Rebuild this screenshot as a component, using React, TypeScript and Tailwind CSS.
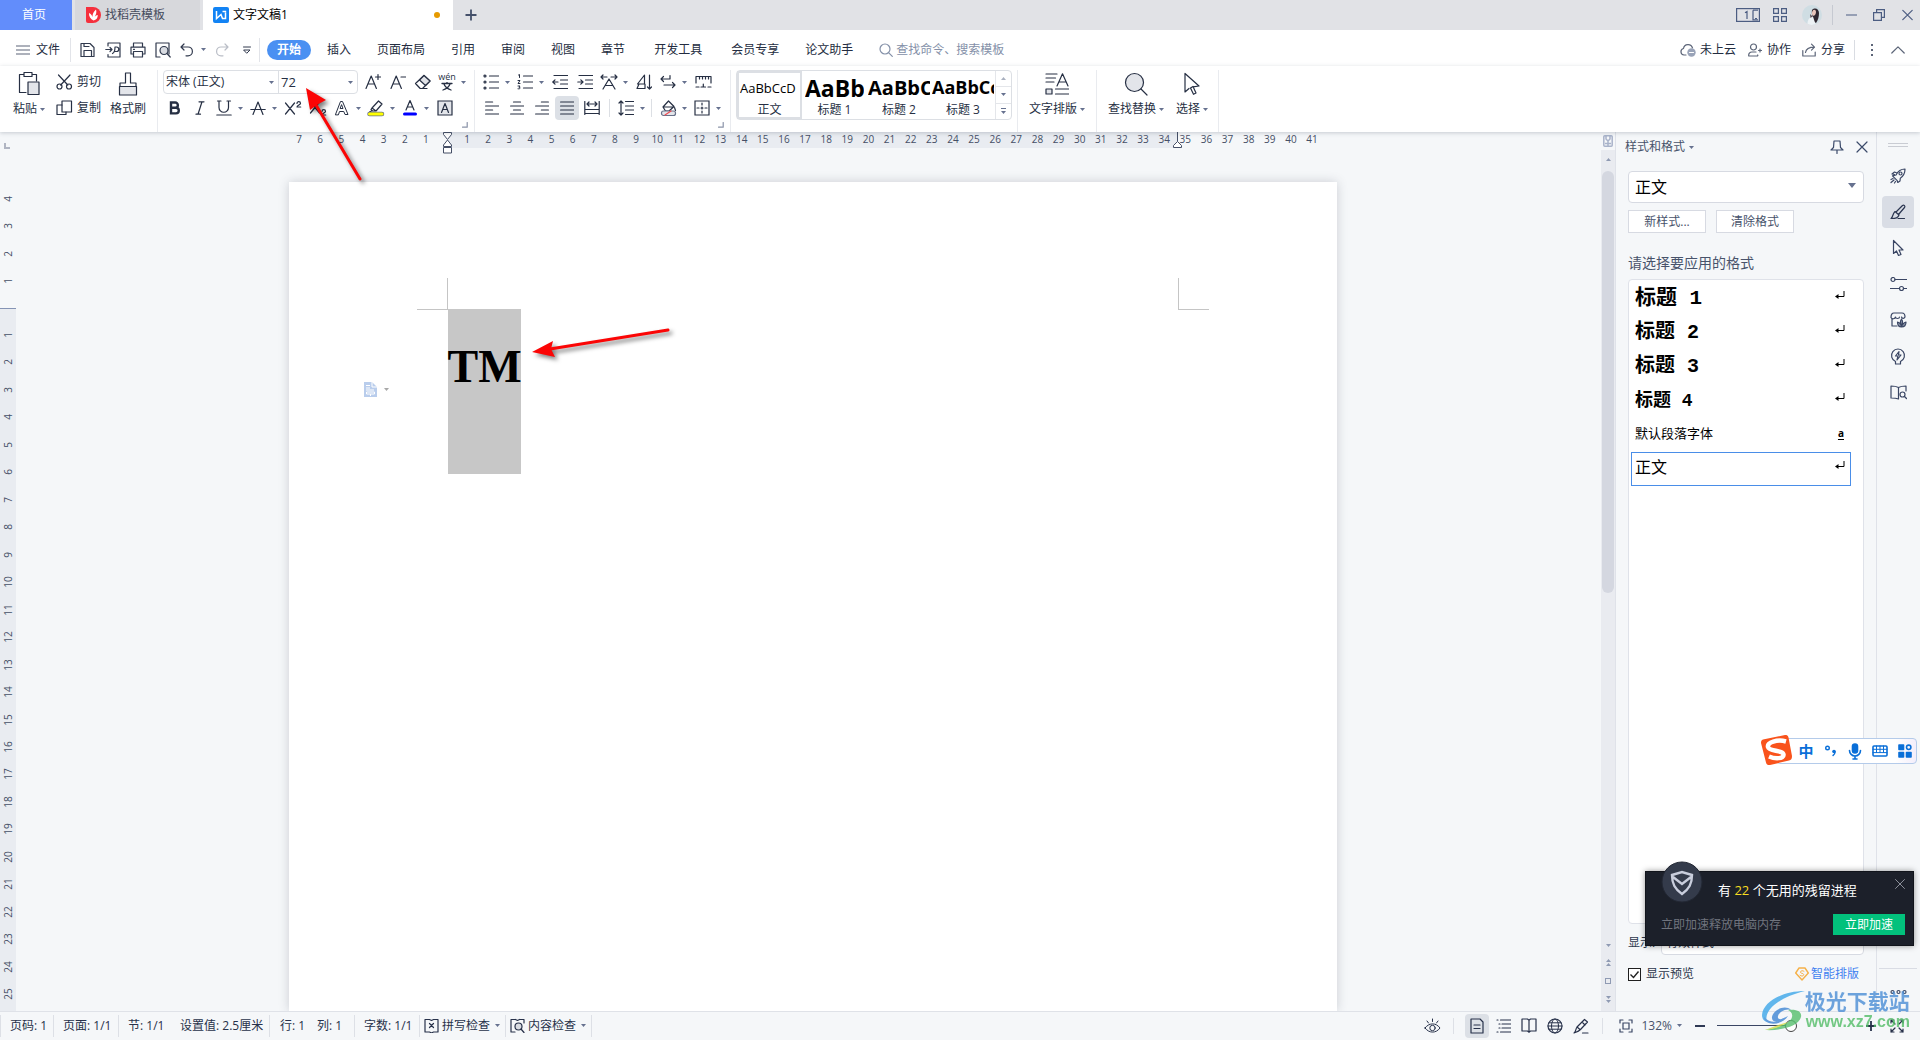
import type { ReactNode } from "react";

type IconProps = { w?: number; h?: number; sw?: number; className?: string; children: ReactNode };

function Icon({ w = 18, h = 18, sw = 1.2, className = "", children }: IconProps) {
  return (
    <svg
      width={w}
      height={h}
      viewBox={`0 0 ${w} ${h}`}
      fill="none"
      stroke="currentColor"
      strokeWidth={sw}
      strokeLinejoin="round"
      strokeLinecap="round"
      className={`shrink-0 ${className}`}
      aria-hidden="true"
    >
      {children}
    </svg>
  );
}

function Caret({ className = "text-[#66718f]" }: { className?: string }) {
  return (
    <svg width="5" height="3" viewBox="0 0 5 3" className={`shrink-0 ${className}`} aria-hidden="true">
      <path d="M0 0h5L2.500 3z" fill="currentColor" />
    </svg>
  );
}

/* Square tool button */
function Tool({ label, active = false, children }: { label: string; active?: boolean; children: ReactNode }) {
  return (
    <button
      aria-label={label}
      className={
        active
          ? "flex h-6 w-6 shrink-0 items-center justify-center rounded-sm bg-[#dce0e6]"
          : "flex h-6 w-6 shrink-0 items-center justify-center rounded-sm"
      }
    >
      {children}
    </button>
  );
}

/* Tool button with a drop-down arrow */
function DropTool({ label, children }: { label: string; children: ReactNode }) {
  return (
    <button aria-label={label} className="flex h-6 shrink-0 items-center">
      <span className="flex w-[22px] justify-center">{children}</span>
      <span className="flex w-[11px] justify-center">
        <Caret />
      </span>
    </button>
  );
}

function BigTool({ icon, label, caret = true }: { icon: ReactNode; label: string; caret?: boolean }) {
  return (
    <button className="flex flex-col items-center">
      <span className="flex h-[28px] items-center">{icon}</span>
      <span className="flex h-[22px] items-center gap-[3px] whitespace-nowrap">
        {label}
        {caret && <Caret />}
      </span>
    </button>
  );
}

const Sep = () => <span className="h-[62px] w-px shrink-0 self-start bg-[#e9ebef]" />;

function Launcher() {
  return (
    <button aria-label="更多设置" className="absolute right-[6px] bottom-1 text-[#8a93a8]">
      <Icon w={6} h={6} sw={1.2}>
        <path d="M5.200 .5v4.700H.5" />
      </Icon>
    </button>
  );
}

function TitleBar() {
  return (
    <header className="flex h-[30px] shrink-0 items-stretch bg-[#e1e2e6]">
      <button className="w-[72px] bg-[#628dfb] pr-1 text-white">首页</button>
      <button className="ml-[3px] flex w-[125px] items-center gap-1 bg-[#d7d8dc] pl-[11px] text-[#454b5c]">
        <svg width="15" height="16" viewBox="0 0 15 16" aria-hidden="true">
          <path d="M0 0h7a8 8 0 0 1 0 16H2a2 2 0 0 1-2-2z" fill="#f5303d" />
          <path d="M7.500 13.500c-3-1.500-4.700-4-4.500-7.500 2 1 3 2.300 3.400 4C6.500 7.500 7.500 4.500 10 2.500c.8 2.500.3 5-1.400 7.200 1-.9 2-1.500 3.200-1.700 0 3-1.500 5-4.300 5.500z" fill="#fff" />
        </svg>
        找稻壳模板
      </button>
      <div className="ml-[3px] flex w-[250px] items-center gap-1 bg-white pl-[10px] text-black">
        <svg width="16" height="16" viewBox="0 0 16 16" aria-hidden="true">
          <rect width="16" height="16" rx="2" fill="#1283f4" />
          <path d="M3.500 4v7.500L8 7.500l1.500 4h3V5.500M9.500 4.500h3.700" stroke="#fff" strokeWidth="1.500" fill="none" />
        </svg>
        <span className="flex-1">文字文稿1</span>
        <span className="mr-[13px] h-[6px] w-[6px] rounded-full bg-[#e69a00]" />
      </div>
      <button aria-label="新建标签" className="flex w-9 items-center justify-center text-[#44506a]">
        <Icon w={12} h={12} sw={1.800}>
          <path d="M6 .5v11M.5 6h11" strokeLinecap="butt" />
        </Icon>
      </button>
      <div className="flex-1" />
      <div className="flex items-center text-[#4c5d82]">
        <button aria-label="窗口布局" className="mr-[13px]">
          <svg width="24" height="14" viewBox="0 0 24 14" fill="none" stroke="currentColor" strokeWidth="1.200" aria-hidden="true">
            <rect x=".6" y=".6" width="22.800" height="12.800" />
            <path d="M9 4.800l2-1.300v7.500M17 2.200h5M17 2.200v9.600h5M19 10.500h2" />
          </svg>
        </button>
        <button aria-label="应用" className="mr-[15px]">
          <Icon w={14} h={14}>
            <path d="M.6.6h4.800v4.800H.6zM8.600.6h4.800v4.800H8.600zM.6 8.600h4.800v4.800H.6zM8.600 8.600h4.800v4.800H8.600z" strokeLinejoin="miter" />
          </Icon>
        </button>
        <button aria-label="用户" className="mr-[10px]">
          <svg width="20" height="20" viewBox="0 0 20 20" aria-hidden="true">
            <circle cx="10" cy="10" r="10" fill="#cfdde3" />
            <path d="M10 5c3-3 7-1 7 3 0 4-1 7-3 10l-3-2c1-3-2-6-1-11z" fill="#2f2730" />
            <path d="M10.500 6c1-2 3.500-1.500 3.500 1s-1.500 4-2.700 3.800C9.800 10.600 9.500 8 10.500 6z" fill="#e9c5bb" />
            <path d="M5.500 18.800c0-4 2-7 5.500-7l2.500 7.300c-3 1.200-5.500 1-8-.3z" fill="#edf2f5" />
            <path d="M8 9l2.500 2.500L8.500 13z" fill="#5d4b52" />
          </svg>
        </button>
        <span className="mr-[13px] h-5 w-px bg-[#c6c9d1]" />
        <button aria-label="最小化" className="mr-4">
          <Icon w={11} h={12}><path d="M.5 6h10" /></Icon>
        </button>
        <button aria-label="还原" className="mr-[17px]">
          <Icon w={12} h={12}>
            <path d="M.6 3.600h7.800v7.800H.6zM3.600 3.600v-3h7.800v7.800H8.400" strokeLinejoin="miter" />
          </Icon>
        </button>
        <button aria-label="关闭" className="mr-[7px]">
          <Icon w={11} h={12}><path d="M.8 1.300l9.400 9.400M10.200 1.300L.8 10.700" /></Icon>
        </button>
      </div>
    </header>
  );
}

function MenuBar() {
  return (
    <nav className="flex h-9 shrink-0 items-center bg-white pt-[3px] whitespace-nowrap text-[#232c40]">
      <button className="ml-4 flex items-center gap-[6px]">
        <Icon w={14} h={10} className="text-[#5c6578]"><path d="M.5 1h13M.5 5h13M.5 9h13" /></Icon>
        文件
      </button>
      <span className="ml-[10px] h-6 w-px bg-[#e2e4e9]" />
      <div className="ml-[5px] flex items-center gap-px text-[#30394d]">
        <Tool label="保存">
          <Icon w={16} h={16}>
            <path d="M1 14.500V1.500h9l4 4v9zM4 1.500v3h5M4 14V8.500h7.500V14" />
          </Icon>
        </Tool>
        <Tool label="输出为PDF">
          <Icon w={16} h={16}>
            <path d="M3 4V1h12v14H3v-2.500M.8 7.500h6M5 5.500l2 2-2 2M7.500 11.500c2-1 2.500-3 2.500-6.500h1.500a2 2 0 0 1 0 4.500H9.500" />
          </Icon>
        </Tool>
        <Tool label="打印">
          <Icon w={16} h={16}>
            <path d="M3.500 5V1h9v4M3.500 12H1V5.200h14V12h-2.500M3.500 9.500h9V15h-9zM3.500 7.300h1" />
          </Icon>
        </Tool>
        <Tool label="打印预览">
          <Icon w={16} h={16}>
            <path d="M5 15H1V1h13v11" />
            <circle cx="9" cy="8.500" r="4" fill="#d9dce2" />
            <path d="M12 11.500l3.200 3.500" />
          </Icon>
        </Tool>
        <DropTool label="撤销">
          <Icon w={14} h={14}><path d="M4 1L1 4l3 3M1.200 4H8a4.300 4.300 0 0 1 0 8.800H6" /></Icon>
        </DropTool>
        <Tool label="恢复">
          <Icon w={14} h={14} className="text-[#b9bdc6]"><path d="M10 1l3 3-3 3M12.800 4H6a4.300 4.300 0 0 0 0 8.800h2" /></Icon>
        </Tool>
        <Tool label="自定义">
          <Icon w={8} h={8} sw={1}><path d="M.5 1h7M1 4h6L4 7z" /></Icon>
        </Tool>
      </div>
      <span className="h-6 w-px bg-[#e2e4e9]" />
      <div className="ml-[7px] flex items-center gap-[26px]">
        <button className="-mr-[10px] h-5 rounded-full bg-[#4a90f2] px-[10px] font-bold text-white">开始</button>
        <button>插入</button>
        <button>页面布局</button>
        <button>引用</button>
        <button>审阅</button>
        <button>视图</button>
        <button>章节</button>
        <button className="px-[3px]">开发工具</button>
        <button>会员专享</button>
        <button>论文助手</button>
        <label className="flex items-center gap-[3px] text-[#8490a8]">
          <Icon w={14} h={14}><circle cx="6" cy="6" r="5" /><path d="M9.800 9.800l3.500 3.500" /></Icon>
          <input aria-label="查找命令" placeholder="查找命令、搜索模板" className="w-[120px] bg-transparent outline-none placeholder:text-[#8490a8]" />
        </label>
      </div>
      <div className="flex-1" />
      <button className="flex items-center gap-1">
        <Icon w={16} h={14} className="text-[#5c6578]">
          <path d="M6 12H4a3.300 3.300 0 0 1-.5-6.500 4.600 4.600 0 0 1 9-.5" />
          <circle cx="11.500" cy="9.500" r="4.200" fill="#99a3b8" stroke="none" />
          <path d="M9.500 9.500h4" stroke="#fff" />
        </Icon>
        未上云
      </button>
      <button className="ml-3 flex items-center gap-[5px]">
        <Icon w={14} h={14} className="text-[#5c6578]">
          <circle cx="5.500" cy="4" r="3" /><path d="M8 9H4a3.200 3.200 0 0 0-3.200 4h8.400c.5 0 .8-.5.5-1M10.500 7.500h3M12 6v3" />
        </Icon>
        协作
      </button>
      <button className="ml-[11px] flex items-center gap-[5px]">
        <Icon w={14} h={14} className="text-[#5c6578]">
          <path d="M.8 7.500V13h12.400V9M3.500 9.500C4 6 7 4.200 12.500 4.200M9.500 1.200l3 3-3 3" />
        </Icon>
        分享
      </button>
      <span className="ml-[9px] h-5 w-px bg-[#d9dce2]" />
      <button aria-label="更多" className="ml-4 flex flex-col gap-[3px]">
        <span className="h-[2px] w-[2px] bg-[#5c6578]" />
        <span className="h-[2px] w-[2px] bg-[#5c6578]" />
        <span className="h-[2px] w-[2px] bg-[#5c6578]" />
      </button>
      <button aria-label="折叠功能区" className="mr-[15px] ml-[18px] text-[#5c6578]">
        <Icon w={14} h={8}><path d="M.8 7L7 .8 13.200 7" /></Icon>
      </button>
    </nav>
  );
}

function FontGroup() {
  return (
    <section className="relative flex h-full flex-col gap-[2px] px-[5px]">
      <div className="flex h-6 items-center">
        <div className="flex h-6 w-[195px] rounded-sm border border-[#dcdfe4]">
          <label className="relative flex w-[115px] items-center border-r border-[#dcdfe4]">
            <input aria-label="字体" defaultValue="宋体 (正文)" className="w-full pl-[2px] outline-none" />
            <span className="absolute right-1"><Caret /></span>
          </label>
          <label className="relative flex flex-1 items-center">
            <input aria-label="字号" defaultValue="72" className="w-full pl-[2px] text-[13px] outline-none" />
            <span className="absolute right-1"><Caret /></span>
          </label>
        </div>
        <div className="ml-[3px] flex gap-px">
          <Tool label="增大字号">
            <Icon w={16} h={18}><path d="M1 15.500L6.200 3l5.200 12.500M3 11h6.500M10.500 4h5M13 1.500v5" /></Icon>
          </Tool>
          <Tool label="减小字号">
            <Icon w={16} h={18}><path d="M1 15.500L6.200 3l5.200 12.500M3 11h6.500M11 4h4.500" /></Icon>
          </Tool>
          <Tool label="清除格式">
            <Icon w={18} h={16}>
              <path d="M1.500 9.500L10 1.500l6 5.500-7.500 7.500H6.200z" />
              <path d="M5.500 6L11.500 11.500 16 7 10 1.500z" fill="#e1e3e8" />
              <path d="M8.500 14.500h4.500" />
            </Icon>
          </Tool>
          <DropTool label="拼音指南">
            <span className="flex flex-col items-center gap-px">
              <span className="h-[8px] text-[9px] leading-[8px]">wén</span>
              <Icon w={12} h={9} sw={1.300}><path d="M1 1.500h10M6 0v1.500M3 2c1 3 4 5 7 6M9 2C8 5 5 7 2 8" /></Icon>
            </span>
          </DropTool>
        </div>
      </div>
      <div className="flex h-6 items-center gap-px">
        <Tool label="加粗">
          <Icon w={12} h={14} sw={2.400}><path d="M2 1.500h4.200a2.600 2.600 0 0 1 0 5.300H2zM2 6.800h5a2.800 2.800 0 0 1 0 5.600H2z" strokeLinejoin="miter" /></Icon>
        </Tool>
        <Tool label="倾斜">
          <Icon w={10} h={14}><path d="M4 .8h5M1 13.200h4.500M7 .8L3 13.200" /></Icon>
        </Tool>
        <DropTool label="下划线">
          <Icon w={16} h={16}><path d="M3 1v6.500a4.500 4.500 0 0 0 9.500 0V1M.8 15h14.400M1.500 1H5M11 1h3.500" /></Icon>
        </DropTool>
        <DropTool label="删除线">
          <Icon w={16} h={16}><path d="M3 14.500L8 2l5 12.500M.8 9.500h14.400" /></Icon>
        </DropTool>
        <Tool label="上标">
          <Icon w={18} h={16}><path d="M1.500 3l9 11M10.500 3l-9 11M13 3.500c0-2.500 3.500-2.500 3.500 0 0 1.200-3.500 2-3.500 3.500h3.700" /></Icon>
        </Tool>
        <Tool label="下标">
          <Icon w={18} h={16}><path d="M1.500 2l9 11M10.500 2l-9 11M13 11.500c0-2.500 3.500-2.500 3.500 0 0 1.200-3.500 2-3.500 3.500h3.700" /></Icon>
        </Tool>
        <DropTool label="文字效果">
          <Icon w={16} h={16} sw={1}>
            <path d="M1.500 14.500L6.500 1.500h2l5.500 13h-3l-1.200-3H5.500l-1 3zM6.500 8.500h2.500L7.700 5z" />
          </Icon>
        </DropTool>
        <DropTool label="突出显示">
          <Icon w={18} h={18}>
            <path d="M5 9l6.500-7L15 5l-6 7H5.500L4 10.500zM5 9l4 3M4.500 12l-2 1" fill="#fff" />
            <path d="M2.500 15h12.500" stroke="#69728a" strokeWidth="4.500" />
            <path d="M2.500 15h12.500" stroke="#ffff00" strokeWidth="3" />
          </Icon>
        </DropTool>
        <DropTool label="字体颜色">
          <Icon w={16} h={18}>
            <path d="M4 11L8 1.500 12 11M5.500 8h5" />
            <path d="M2.500 15h11" stroke="#0000ff" strokeWidth="3" />
          </Icon>
        </DropTool>
        <Tool label="字符底纹">
          <Icon w={16} h={16}>
            <path d="M1 1h14v14H1z" fill="#e3e5ea" strokeLinejoin="miter" />
            <path d="M4.500 12.500L8 3.500l3.500 9M5.700 9.500h4.600" />
          </Icon>
        </Tool>
      </div>
      <Launcher />
    </section>
  );
}

function ParagraphGroup() {
  return (
    <section className="relative flex h-full flex-col gap-[2px] pr-[3px] pl-[5px]">
      <div className="flex h-6 items-center gap-px pr-3">
        <DropTool label="项目符号">
          <Icon w={16} h={16}>
            <path d="M6.500 2h9M6.500 8h9M6.500 14h9" />
            <circle cx="2" cy="2" r="1" /><circle cx="2" cy="8" r="1" /><circle cx="2" cy="14" r="1" />
          </Icon>
        </DropTool>
        <DropTool label="编号">
          <Icon w={16} h={16}>
            <path d="M6.500 2h9M6.500 8h9M6.500 14h9" />
            <path d="M1.500 1L2.500.5V3.500M1 6.500h2L1 9.500h2M1 12h2l-1 1.300c2 0 1.500 2-1 1.500" strokeWidth="1" />
          </Icon>
        </DropTool>
        <Tool label="减少缩进">
          <Icon w={16} h={16}><path d="M2 1.500h13.500M8.500 6h7M8.500 10h7M2 14.500h13.500M.8 8H6M3 5.800L.8 8 3 10.200" /></Icon>
        </Tool>
        <Tool label="增加缩进">
          <Icon w={16} h={16}><path d="M2 1.500h13.500M8.500 6h7M8.500 10h7M2 14.500h13.500M.8 8H6M3.800 5.800L6 8l-2.200 2.200" /></Icon>
        </Tool>
        <DropTool label="中文版式">
          <Icon w={18} h={16}><path d="M3 15L9 5l6 10M5 11.500h8M1 3h6M3 1L1 3l2 2M11 3h6M15 1l2 2-2 2" /></Icon>
        </DropTool>
        <Tool label="排序">
          <Icon w={16} h={18}><path d="M8.500 2L1.500 11h7zM3 11l-2 4.500h8V11M13.500 2v14M11.500 14l2 2 2-2" /></Icon>
        </Tool>
        <DropTool label="换行">
          <Icon w={16} h={16}><path d="M10 1.500V5H1M3.500 2.500L1 5l2.500 2.500M4 11h11M12.500 8.500L15 11l-2.500 2.500" /></Icon>
        </DropTool>
        <Tool label="制表位">
          <Icon w={17} h={14}><path d="M1 8V1.500h15V8M4.500 1.500V4M7.500 1.500V4M10.500 1.500V4M13.500 1.500V4M1 12h3M6 12h4.500M13 12h3M8.300 9v3" /></Icon>
        </Tool>
      </div>
      <div className="flex h-6 items-center gap-px">
        <Tool label="左对齐"><Icon w={14} h={14}><path d="M.6 1h7M.6 5h13M.6 9h7M.6 13h13" /></Icon></Tool>
        <Tool label="居中"><Icon w={14} h={14}><path d="M3.500 1h7M.6 5h13M3.500 9h7M.6 13h13" /></Icon></Tool>
        <Tool label="右对齐"><Icon w={14} h={14}><path d="M6.400 1h7M.6 5h13M6.400 9h7M.6 13h13" /></Icon></Tool>
        <Tool label="两端对齐" active><Icon w={14} h={14}><path d="M.6 1h13M.6 5h13M.6 9h13M.6 13h13" /></Icon></Tool>
        <Tool label="分散对齐"><Icon w={16} h={14}><path d="M.8.5v13M15.200.5v13M3 3h10M5 1L3 3l2 2M11 1l2 2-2 2M.8 8.500h14.400M.8 12.500h14.400" /></Icon></Tool>
        <span className="mx-1 h-[18px] w-px bg-[#dcdfe4]" />
        <DropTool label="行距">
          <Icon w={16} h={16}><path d="M7.500 1.500h8M7.500 6h8M7.500 10h8M7.500 14.500h8M3 1v14M1 3l2-2 2 2M1 13l2 2 2-2" /></Icon>
        </DropTool>
        <span className="mr-1 ml-[2px] h-[18px] w-px bg-[#dcdfe4]" />
        <DropTool label="底纹">
          <Icon w={17} h={18}>
            <path d="M3 8l5.500-6L14 7.500 9 12H5.500zM3 8h11M14.500 8.500l1 3" fill="#fff" />
            <rect x="1.500" y="12" width="14" height="4.500" rx="2" fill="#e3e5ea" stroke="#69728a" />
            <path d="M5 16l6-4" stroke="#f0484e" />
          </Icon>
        </DropTool>
        <DropTool label="边框">
          <Icon w={16} h={16}><path d="M1 1h14v14H1z" strokeLinejoin="miter" /><path d="M8 3v10M3 8h10" strokeDasharray="2 2" /></Icon>
        </DropTool>
      </div>
      <Launcher />
    </section>
  );
}

function StyleGallery() {
  return (
    <section className="flex h-full items-start px-[5px]">
      <div className="flex h-[50px] w-[276px] rounded-sm border border-[#dcdfe4] text-center">
        <button className="flex w-[65px] shrink-0 flex-col overflow-hidden border-2 border-[#dcdfe4] px-px">
          <span className="h-[28px] text-left text-[13px] leading-[30px] text-black">AaBbCcD</span>
          <span className="h-[18px] w-full leading-[18px]">正文</span>
        </button>
        <button className="flex w-[65px] shrink-0 flex-col overflow-hidden px-[3px]">
          <span className="h-[30px] w-full overflow-hidden text-left text-[23px] leading-[34px] font-bold text-black">AaBb</span>
          <span className="h-[18px] w-full leading-[18px]">标题 1</span>
        </button>
        <button className="flex w-[64px] shrink-0 flex-col overflow-hidden px-px">
          <span className="h-[30px] w-full overflow-hidden text-left text-[20px] leading-[33px] font-bold text-black">AaBbC</span>
          <span className="h-[18px] w-full leading-[18px]">标题 2</span>
        </button>
        <button className="flex w-[64px] shrink-0 flex-col overflow-hidden px-px">
          <span className="h-[30px] w-full overflow-hidden text-left text-[18px] leading-[33px] font-bold text-black">AaBbCc</span>
          <span className="h-[18px] w-full leading-[18px]">标题 3</span>
        </button>
        <div className="flex flex-1 flex-col divide-y divide-[#e4e6ea] border-l border-[#e4e6ea] text-[#66718f]">
          <button aria-label="上一行" className="flex flex-1 items-center justify-center">
            <span className="rotate-180"><Caret className="text-[#a9b0bf]" /></span>
          </button>
          <button aria-label="下一行" className="flex flex-1 items-center justify-center"><Caret /></button>
          <button aria-label="更多样式" className="flex flex-1 flex-col items-center justify-center gap-[2px]">
            <span className="h-px w-[5px] bg-[#66718f]" />
            <Caret />
          </button>
        </div>
      </div>
    </section>
  );
}

function Ribbon() {
  return (
    <div className="relative z-10 flex h-[66px] shrink-0 items-start bg-white pt-1 text-[#262f43] shadow-[0_1px_4px_rgba(60,70,90,0.25)]">
      <section className="flex w-[157px] shrink-0 items-start pl-[13px]">
        <BigTool
          label="粘贴"
          icon={
            <Icon w={24} h={26}>
              <path d="M9 21.500H2.500V3.500h17V10" />
              <path d="M7 5.500V1.500h8v4z" fill="#fff" />
              <path d="M11 11h11v12.500H11z" fill="#e3e5ea" />
            </Icon>
          }
        />
        <div className="ml-[11px] flex flex-col gap-[2px]">
          <button className="flex h-6 items-center gap-1">
            <Icon w={17} h={16}>
              <path d="M2.500 1l9.300 10M14 1L4.700 11" /><circle cx="3.500" cy="12.500" r="2.500" /><circle cx="13" cy="12.500" r="2.500" />
            </Icon>
            剪切
          </button>
          <button className="flex h-6 items-center gap-1">
            <Icon w={17} h={16}><path d="M6 1h9.500v11H6z" /><path d="M6 5H1v9.500h9V12" /></Icon>
            复制
          </button>
        </div>
        <div className="ml-[9px]">
          <BigTool
            label="格式刷"
            caret={false}
            icon={
              <Icon w={20} h={26}>
                <path d="M7.500 12V2h5v10H18v3.500H2V12z" />
                <path d="M1.500 15.500h17v8.500h-17z" fill="#e3e5ea" />
              </Icon>
            }
          />
        </div>
      </section>
      <Sep />
      <FontGroup />
      <Sep />
      <ParagraphGroup />
      <Sep />
      <StyleGallery />
      <Sep />
      <section className="flex w-[78px] shrink-0 justify-center">
        <BigTool
          label="文字排版"
          icon={
            <Icon w={24} h={22}>
              <path d="M1 1h11M1 5h9.500M1 9h8M12 13L17.500.8 23 13M14 9h7M10.500 16h13M10.500 21h13" /><path d="M1 16h6v5H1z" fill="#e3e5ea" />
            </Icon>
          }
        />
      </section>
      <Sep />
      <section className="flex w-[121px] shrink-0 gap-3 pl-[11px]">
        <BigTool
          label="查找替换"
          icon={<Icon w={24} h={24}><circle cx="10.500" cy="10.500" r="9" fill="#e3e5ea" /><path d="M17 17l6 6" /></Icon>}
        />
        <BigTool
          label="选择"
          icon={<Icon w={18} h={24}><path d="M2 1.500V20l4-3.500M2 1.500L16 14l-6 .8M10 14.500l3 6.500-2.500 1.300L7.500 16z" /></Icon>}
        />
      </section>
      <Sep />
    </div>
  );
}

const upTicks = [7, 6, 5, 4, 3, 2, 1];
const hTicks = Array.from({ length: 41 }, (_, i) => i + 1);
const vTicks = Array.from({ length: 25 }, (_, i) => i + 1);

function VerticalRuler() {
  return (
    <aside className="flex w-4 shrink-0 flex-col text-[10px] leading-none text-[#454f66]">
      <span className="mt-[11px] ml-1 h-[6px] w-[6px] border-b-2 border-l-2 border-[#b0b5c2]" />
      <div className="mt-9 flex h-[110px] flex-col">
        {[4, 3, 2, 1].map((n) => (
          <span key={n} className="flex flex-1 items-center justify-center">
            <span className="-rotate-90">{n}</span>
          </span>
        ))}
      </div>
      <div className="mt-[13px] flex flex-1 flex-col border-t border-[#8594b5] bg-[#e9ecf1] pt-3">
        <div className="flex h-[687px] flex-col">
          {vTicks.map((n) => (
            <span key={n} className="flex flex-1 items-center justify-center">
              <span className="-rotate-90">{n}</span>
            </span>
          ))}
        </div>
      </div>
    </aside>
  );
}

function Document() {
  return (
    <div className="flex min-w-0 flex-1 flex-col items-center overflow-hidden pl-2">
      <div className="relative flex h-4 w-[1048px] shrink-0 text-[10px] leading-[15px] text-[#454f66]">
        <span className="absolute top-0 left-[158px] h-4 w-[730px] bg-[#e9ecf1]" />
        <div className="relative flex w-[148px]">
          {upTicks.map((n) => (
            <span key={n} className="flex-1 text-center">{n}</span>
          ))}
        </div>
        <div className="relative ml-5 flex w-[866px]">
          {hTicks.map((n) => (
            <span key={n} className="w-0 flex-1 text-center">{n}</span>
          ))}
        </div>
        <svg width="10" height="22" viewBox="0 0 10 22" className="absolute top-0 left-[154px]" fill="#fff" stroke="#454f66" aria-hidden="true">
          <path d="M.5.5h8v2l-4 5-4-5zM4.500 8l4 5v1.500h-8V13zM.5 15.500h8v5.500h-8z" />
        </svg>
        <svg width="10" height="16" viewBox="0 0 10 16" className="absolute top-0 left-[884px]" fill="#fff" stroke="#454f66" aria-hidden="true">
          <path d="M4.500 0v9.500M4.500 9.500l4 4v2h-8v-2z" />
        </svg>
      </div>
      <article className="relative mt-[34px] w-[1048px] flex-1 bg-white shadow-[0_0_10px_rgba(60,65,80,0.22)]">
        <div className="flex justify-between px-32 pt-24">
          <span className="h-8 w-[31px] border-r border-b border-[#c5c5c5]" />
          <span className="h-8 w-[31px] border-b border-l border-[#c5c5c5]" />
        </div>
        <div className="ml-[159px] -mt-px h-[165px] w-[73px] bg-[#c7c7c7] pt-[34px] text-black">
          <p className="font-['Liberation_Serif',serif] text-[46px] leading-[48px] font-bold">TM</p>
        </div>
        <button aria-label="粘贴选项" className="absolute top-[200px] left-[75px] flex items-center gap-[7px]">
          <svg width="13" height="15" viewBox="0 0 13 15" aria-hidden="true">
            <path d="M0 0h8l5 5v10H0z" fill="#b9cdec" />
            <path d="M8 0v5h5M2 3.500h4M2 6h4M2 8h8M2.500 10h8v2h-8zM6.500 12v2" stroke="#fff" fill="none" />
          </svg>
          <Caret className="text-[#a8a8a8]" />
        </button>
      </article>
    </div>
  );
}

function ScrollBar() {
  return (
    <div className="flex w-[14px] shrink-0 flex-col items-center bg-[#e9ebf0] text-[#8f9ab3]">
      <div className="flex h-[18px] w-full items-center justify-center bg-[#f5f7f9]">
        <svg width="10" height="12" viewBox="0 0 10 12" fill="none" stroke="#a9b3ca" strokeWidth="1.500" aria-hidden="true">
          <rect x=".8" y=".8" width="8.400" height="10.400" rx="1" /><path d="M3 1v3l2 2 2-2V1M2 8.500h6M5 6v5" />
        </svg>
      </div>
      <button aria-label="向上滚动" className="mt-2 rotate-180"><Caret className="text-[#8f9ab3]" /></button>
      <div className="mt-[10px] h-[422px] w-3 rounded-full bg-[#d4d7e0]" />
      <div className="flex-1" />
      <div className="mb-2 flex flex-col items-center gap-3">
        <Caret className="text-[#8f9ab3]" />
        <span className="flex rotate-180 flex-col gap-px"><Caret className="text-[#8f9ab3]" /><Caret className="text-[#8f9ab3]" /></span>
        <span className="h-[6px] w-[6px] border border-[#8f9ab3]" />
        <span className="flex flex-col gap-px"><Caret className="text-[#8f9ab3]" /><Caret className="text-[#8f9ab3]" /></span>
      </div>
    </div>
  );
}

const styleRows = [
  { name: "标题 1", cls: "text-[21px] font-bold" },
  { name: "标题 2", cls: "text-[20px] font-bold" },
  { name: "标题 3", cls: "text-[20px] font-bold" },
  { name: "标题 4", cls: "text-[18px] font-bold" },
  { name: "默认段落字体", cls: "text-[13px]" },
  { name: "正文", cls: "text-[16px]" },
];

function StylesPanel() {
  return (
    <aside className="flex w-[262px] shrink-0 flex-col border-x border-[#dfe2e9] px-3 text-[#48536b]">
      <div className="-ml-[3px] flex h-[30px] shrink-0 items-center">
        <button className="flex items-center gap-1">样式和格式 <Caret /></button>
        <div className="flex-1" />
        <button aria-label="固定" className="mr-3 text-[#3b4a6a]">
          <Icon w={14} h={14}><path d="M4 1h6l.5 6.500L13 10H1l2.500-2.500zM7 10v3.500" /></Icon>
        </button>
        <button aria-label="关闭窗格" className="-mr-1 text-[#3b4a6a]">
          <Icon w={12} h={12}><path d="M1 1l10 10M11 1L1 11" /></Icon>
        </button>
      </div>
      <div className="relative mt-[9px] shrink-0">
        <select aria-label="当前样式" className="block h-8 w-full appearance-none rounded-sm border border-[#d7dae2] bg-white pl-[6px] text-[16px] text-black">
          <option>正文</option>
        </select>
        <svg width="8" height="5" viewBox="0 0 8 5" className="absolute top-3 right-2" aria-hidden="true">
          <path d="M0 0h8L4 5z" fill="#66718f" />
        </svg>
      </div>
      <div className="mt-[7px] flex shrink-0 gap-[10px]">
        <button className="h-[23px] w-[78px] border border-[#d7dae2] bg-white">新样式...</button>
        <button className="h-[23px] w-[78px] border border-[#d7dae2] bg-white">清除格式</button>
      </div>
      <h2 className="mt-5 shrink-0 text-[14px] leading-5">请选择要应用的格式</h2>
      <ul className="mt-[6px] flex-1 rounded-sm border border-[#dfe2e9] bg-white px-[2px] pt-[2px] text-black">
        {styleRows.map((r, i) => (
          <li key={r.name} className="mr-[10px]">
            <button
              className={
                i === 5
                  ? "flex h-[34px] w-full items-center border border-[#4a8ee8] pr-[5px] pl-[3px]"
                  : "flex h-[34px] w-full items-center border border-transparent pr-[5px] pl-[3px]"
              }
            >
              <span className={`flex-1 text-left font-['Liberation_Mono','Noto_Sans_CJK_SC',sans-serif] leading-6 ${r.cls}`}>{r.name}</span>
              {i === 4 ? (
                <span className="mr-px mb-1 text-[10px] leading-[10px] font-bold underline underline-offset-2">a</span>
              ) : (
                <svg width="10" height="9" viewBox="0 0 10 9" className="mb-2" aria-hidden="true">
                  <path d="M9 0v5.500H2" stroke="#000" fill="none" /><path d="M0 5.500L3.500 3v5z" fill="#000" />
                </svg>
              )}
            </button>
          </li>
        ))}
      </ul>
      <label className="mt-[6px] flex shrink-0 items-center text-[#2d374c]">
        <span className="w-[33px]">显示:</span>
        <select aria-label="显示" className="block h-[25px] flex-1 appearance-none rounded-sm border border-[#d7dae2] bg-white px-1 leading-4">
          <option>有效样式</option>
        </select>
      </label>
      <div className="mt-[11px] mb-[29px] flex h-4 shrink-0 items-center text-[#2d374c]">
        <label className="relative flex items-center gap-[5px]">
          <input type="checkbox" defaultChecked className="peer h-[13px] w-[13px] appearance-none border border-[#1f1f1f] bg-white" />
          <svg width="13" height="13" viewBox="0 0 13 13" className="pointer-events-none absolute left-0 hidden peer-checked:block" fill="none" stroke="#222" strokeWidth="1.400" aria-hidden="true">
            <path d="M2.500 6.500l3 3 5-6" />
          </svg>
          显示预览
        </label>
        <div className="flex-1" />
        <a href="#layout" className="mr-[5px] flex items-center gap-[2px] text-[#3f7ff0]">
          <Icon w={14} h={14} className="text-[#f5b14a]" sw={1.400}>
            <path d="M4 1h6l3.300 5L7 13 .7 6z" />
            <path d="M9 4.300C7.500 3 5 4 5.500 5.500c.5 1 3 .7 3.200 2C9 9 6.500 9.800 5 8.300" strokeWidth="1" />
          </Icon>
          智能排版
        </a>
      </div>
    </aside>
  );
}

function SideTools() {
  return (
    <aside className="flex flex-1 flex-col items-center pr-px text-[#3a4664]">
      <span className="mt-[11px] h-1 w-5 border-y border-[#c9ccd3]" />
      <div className="mt-[13px] flex flex-col gap-1">
        <button aria-label="快捷工具" className="flex h-8 w-8 items-center justify-center">
          <Icon w={16} h={16}>
            <path d="M15 1c-4 0-7 2-9 6l-3.500.8 2 2L7 12.300l.8 2.200L10 13l.3-2.800C13.500 8 15 5 15 1zM4.500 6.500L2 6l2.500-2L7 5M1 11.500l2-1M1 14.500l3-2.500M4.500 15l1-1.500" />
            <circle cx="10.500" cy="5.500" r="1.500" />
          </Icon>
        </button>
        <button aria-label="样式和格式" className="flex h-8 w-8 items-center justify-center rounded-sm bg-[#d9dde5] text-[#2a3550]">
          <Icon w={16} h={16}><path d="M6 8l6.500-6.500c1.500-1 3 .5 2 2L8.500 10.500M5 7.500l4 3.500c-1 3-3 3.500-8 3.500 2-1 1.500-5 4-7zM8 14.500h6.500" /></Icon>
        </button>
        <button aria-label="选择" className="flex h-8 w-8 items-center justify-center">
          <Icon w={14} h={18}><path d="M2.500 1.500v13l3-2.500 2 4.500 2.500-1-2-4.500h4z" /></Icon>
        </button>
        <button aria-label="属性" className="flex h-8 w-8 items-center justify-center">
          <Icon w={17} h={14}><circle cx="3" cy="2.500" r="2" /><path d="M5 2.500h11.500M.5 11.500h9M13.500 11.500h3" /><circle cx="11.500" cy="11.500" r="2" /></Icon>
        </button>
        <button aria-label="稻壳资源" className="flex h-8 w-8 items-center justify-center">
          <Icon w={17} h={16}>
            <path d="M2 6.500V14h5M1 5.500c0-3 1-4.500 3-4.500h8c2 0 3 1.500 3 4-1 2-3 1.500-3.500 0M1 5.500c1 2 4 1.500 4.500-.5 0 2 4 2 4 0" />
            <path d="M11.500 7c1.500 2 1.500 4 0 6.500-1.500-2.500-1.500-4.500 0-6.500zM7.500 10c2 .5 3.500 2 4 5-2.500 0-4-2-4-5zM16 10c-2 .5-3.500 2-4.500 5 3 0 4.500-2 4.500-5z" fill="#8b94a8" />
          </Icon>
        </button>
        <button aria-label="功能推荐" className="flex h-8 w-8 items-center justify-center">
          <Icon w={16} h={17}><path d="M5.500 13.500a6.500 6.500 0 1 1 5 0V16h-5zM9 3.500L5.500 8H8l-1 4 4-5H8.500z" /></Icon>
        </button>
        <button aria-label="帮助中心" className="flex h-8 w-8 items-center justify-center">
          <Icon w={17} h={15}><path d="M8.500 2.500C6 1 4 1 1 1v12c3 0 5 0 7.500 1V2.500C11 1 13 1 16 1v5" /><circle cx="12.500" cy="9.500" r="2.500" /><path d="M14.500 11.500l2 2" /></Icon>
        </button>
      </div>
      <div className="flex-1" />
      <span className="mb-5 h-px w-[38px] bg-[#d9dce4]" />
      <button aria-label="更多" className="mb-4">
        <Icon w={17} h={6}><circle cx="2.500" cy="3" r="1.500" /><circle cx="8.500" cy="3" r="1.500" /><circle cx="14.500" cy="3" r="1.500" /></Icon>
      </button>
    </aside>
  );
}

const Bar = () => <span className="h-[22px] w-px shrink-0 bg-[#dde0e6]" />;

function StatusBar() {
  return (
    <footer className="flex h-[29px] shrink-0 items-center border-t border-[#dfe2e8] pb-px whitespace-nowrap text-[#27314a]">
      <Bar />
      <span className="w-[52px] pl-[9px]">页码: 1</span>
      <Bar />
      <span className="w-16 pl-[9px]">页面: 1/1</span>
      <Bar />
      <span className="w-[61px] pl-[9px]">节: 1/1</span>
      <span className="w-[89px]">设置值: 2.5厘米</span>
      <Bar />
      <span className="w-[47px] pl-[10px]">行: 1</span>
      <span className="w-[37px]">列: 1</span>
      <Bar />
      <span className="w-16 pl-[9px]">字数: 1/1</span>
      <Bar />
      <button className="flex w-[85px] items-center gap-[3px] pl-1">
        <Icon w={15} h={15}><path d="M5.500 1.500H1v12.500h4.500L7.500 15l2-1H14V1.500H9.500l-2 1zM5.500 5.500l4 4M9.500 5.500l-4 4" /></Icon>
        拼写检查
        <span className="ml-[2px]"><Caret /></span>
      </button>
      <Bar />
      <button className="flex w-[85px] items-center gap-[3px] pl-1">
        <Icon w={15} h={15}><path d="M5.500 1.500H1v12.500h4M9.500 1.500H14V5M5.500 1.500l2 1 2-1" /><circle cx="8.500" cy="8.500" r="3.500" fill="#d9dce2" /><path d="M11 11l3 3.500" /></Icon>
        内容检查
        <span className="ml-[2px]"><Caret /></span>
      </button>
      <Bar />
      <div className="flex-1" />
      <button aria-label="护眼模式" className="mr-3">
        <Icon w={17} h={16} sw={1}><path d="M1 10c4-5.500 11-5.500 15 0-4 5.500-11 5.500-15 0zM8.500 1v2.500M3 3l1.500 2M14 3l-1.500 2" /><circle cx="8.500" cy="10" r="2.700" /></Icon>
      </button>
      <span className="h-4 w-px bg-[#dde0e6]" />
      <div className="ml-[11px] flex items-center gap-[2px]">
        <Tool label="页面视图" active><Icon w={14} h={16}><path d="M1 1h9l3 3v11H1zM4 7h6M4 10.500h6" /></Icon></Tool>
        <Tool label="大纲"><Icon w={15} h={14}><path d="M1 1h1M4.500 1h10M3 5h1M6 5h8.500M3 9h1M6 9h8.500M1 13h1M4.500 13h10" /></Icon></Tool>
        <Tool label="阅读版式"><Icon w={16} h={15}><path d="M1 1h5.500L8 2.200 9.500 1H15v12H9.500L8 14.200 6.500 13H1zM8 2.500v11" /></Icon></Tool>
        <Tool label="Web版式"><Icon w={16} h={16}><circle cx="8" cy="8" r="7" /><path d="M1 8h14M2 4.800h12M2 11.200h12" strokeWidth="1" /><ellipse cx="8" cy="8" rx="3.500" ry="7" strokeWidth="1" /></Icon></Tool>
        <Tool label="写作模式"><Icon w={17} h={16}><path d="M1 15c2-1 1.500-4 3-6l7.500-7.500 3 2.500-7 7.500c-2 2-4 2.500-6.500 3.500zM9 4l3 3M4 9l3 2.500M9.500 15H15" /></Icon></Tool>
      </div>
      <span className="ml-[9px] h-4 w-px bg-[#dde0e6]" />
      <button aria-label="适合页面" className="ml-4 text-[#3a4664]">
        <Icon w={14} h={14}><path d="M1 4V1h3M10 1h3v3M13 10v3h-3M4 13H1v-3M4 4h6v6H4z" strokeLinejoin="miter" /></Icon>
      </button>
      <button className="ml-2 flex items-center gap-[5px] text-[#48536b]">132% <Caret /></button>
      <button aria-label="缩小" className="ml-[13px] h-[2px] w-[10px] bg-[#2f3a55]" />
      <input
        type="range"
        aria-label="显示比例"
        min={0}
        max={100}
        defaultValue={52}
        className="ml-3 h-3 w-[143px] appearance-none bg-[linear-gradient(#3a4664,#3a4664)] bg-[length:50%_1px] bg-left bg-no-repeat [&::-webkit-slider-thumb]:h-3 [&::-webkit-slider-thumb]:w-3 [&::-webkit-slider-thumb]:appearance-none [&::-webkit-slider-thumb]:rounded-full [&::-webkit-slider-thumb]:border [&::-webkit-slider-thumb]:border-[#444] [&::-webkit-slider-thumb]:bg-white"
      />
      <button aria-label="放大" className="ml-[6px]">
        <Icon w={10} h={10} sw={1.800}><path d="M5 0v10M0 5h10" strokeLinecap="butt" /></Icon>
      </button>
      <button aria-label="全屏" className="mr-4 ml-[14px]">
        <Icon w={14} h={14}><path d="M1 4V1h3M10 1h3v3M13 10v3h-3M4 13H1v-3M1 1l4 4M13 1L9 5M13 13L9 9M1 13l4-4" /></Icon>
      </button>
    </footer>
  );
}

/* Input-method toolbar floating above the window */
function ImeBar() {
  return (
    <div className="absolute top-[738px] right-[3px] z-20 flex items-center text-[#0a6fd8]">
      <div className="flex h-[26px] items-center gap-[10px] rounded-sm border border-[#b4cbea] bg-[linear-gradient(90deg,#fff_85%,#f3eefb)] pr-1 pl-[21px]">
        <button className="w-4 text-[15px] leading-4 font-bold">中</button>
        <Icon w={14} h={14} sw={1.400}><circle cx="3.500" cy="4" r="1.800" /><circle cx="10" cy="7.500" r="1.800" fill="currentColor" stroke="none" /><path d="M11 8c0 2-1 3-2 3.500" /></Icon>
        <Icon w={14} h={17} sw={1.600}><rect x="4.500" y="1" width="5" height="9" rx="2.500" fill="currentColor" /><path d="M1.500 7.500a5.500 5.500 0 0 0 11 0M7 13v3M5 16h4" /></Icon>
        <Icon w={16} h={12} sw={1.600}><rect x="1" y="1" width="14" height="10" rx="1" /><path d="M1 4.300h14M1 7.600h14M4.500 1v6.500M8 1v6.500M11.500 1v6.500" strokeWidth="1" /></Icon>
        <Icon w={14} h={14} sw={1.600}>
          <path d="M1 1h4.500v4.500H1zM1 8.500h4.500V13H1zM8.500 8.500H13V13H8.500z" fill="currentColor" /><circle cx="10.700" cy="3.300" r="2.200" />
        </Icon>
      </div>
      <svg width="33" height="32" viewBox="0 0 33 32" className="absolute bottom-[-2px] -left-4" aria-hidden="true">
        <path d="M3 5.500L25 1c2 0 3 .5 3.500 2.500L32 22c0 3-1 4-3 4.500L10 31c-2 .3-3.500-.5-4-2.500L1 9c0-2 .5-3 2-3.500z" fill="#f9531c" />
        <path d="M26 7.500C17 5 7 8.500 8 13s15 3 15.500 7.500S15 25 9 22.500" stroke="#fff" strokeWidth="4.500" fill="none" />
      </svg>
    </div>
  );
}

function CleanerToast() {
  return (
    <div className="absolute right-[6px] bottom-[94px] z-20 flex h-[75px] w-[269px] flex-col justify-between border border-[#11141b] bg-[#1c202a] px-2 pt-[7px] pb-[10px] shadow-[0_0_6px_rgba(0,0,0,0.4)]">
      <svg width="42" height="42" viewBox="0 0 42 42" className="absolute -top-[11px] left-[15px]" aria-hidden="true">
        <circle cx="21" cy="21" r="20" fill="#343b4b" stroke="#222733" />
        <path d="M11 14l10-3 10 3c0 9-3 14-10 19-7-5-10-10-10-19zM12 16l9 7 9-7" fill="none" stroke="#c9cedd" strokeWidth="2.400" />
      </svg>
      <div className="flex items-start pl-16 text-[13px] leading-[22px] text-white">
        <p className="flex-1 whitespace-nowrap">有 <span className="text-[#f7dc22]">22</span> 个无用的残留进程</p>
        <button aria-label="关闭提示" className="text-[#8b8f99]">
          <Icon w={10} h={10} sw={1}><path d="M.5.5l9 9M9.500.5l-9 9" /></Icon>
        </button>
      </div>
      <div className="flex items-center justify-between pl-[7px]">
        <span className="text-[#70747e]">立即加速释放电脑内存</span>
        <button className="h-[21px] w-[72px] bg-[#02c17c] text-white">立即加速</button>
      </div>
    </div>
  );
}

function SiteMark() {
  return (
    <div className="pointer-events-none absolute right-[10px] bottom-[8px] z-20 flex items-center opacity-80">
      <svg width="46" height="42" viewBox="0 0 46 42" aria-hidden="true">
        <path d="M45 1C22 1 3 12 2 25c0 4 2 6 5 7C3 20 20 7 45 1z" fill="#3da7ea" />
        <path d="M31 20c-6-6-18 0-19 7s10 6 13 0c-3 3-8 3-7-1s8-8 13-6z" fill="#3f86d4" />
        <path d="M4 27c0 9 18 9 24-1l-6 3c-6 4-12 4-18-2z" fill="#3f86d4" />
        <path d="M28 20c10-1 14 2 13 7-2 9-20 14-36 13 12-2 26-7 27-13 1-4-2-6-4-7z" fill="#56bf6d" />
        <path d="M5 40c9-1 18-4 23-8l-10 3z" fill="#d4dc45" />
      </svg>
      <div className="-ml-px leading-none font-bold whitespace-nowrap">
        <p className="text-[21px] leading-[22px] text-[#4b8ed6]">极光下载站</p>
        <p className="pl-px font-['Liberation_Sans',sans-serif] text-[16px] leading-5 text-[#53bd68]">www.xz7.com</p>
      </div>
    </div>
  );
}

/* Red pointer arrows drawn over the window */
function Arrows() {
  return (
    <>
      <svg width="70" height="104" viewBox="0 0 70 104" className="pointer-events-none absolute top-[82px] left-[300px] z-20 drop-shadow-[3px_3px_2px_rgba(0,0,0,0.5)]" aria-hidden="true">
        <path d="M16 23L60 97" stroke="#fb0505" strokeWidth="3" strokeLinecap="round" />
        <path d="M6 6l20 12-8.500 4.500L10 28z" fill="#fb0505" />
      </svg>
      <svg width="146" height="36" viewBox="0 0 146 36" className="pointer-events-none absolute top-[324px] left-[528px] z-20 drop-shadow-[3px_3px_2px_rgba(0,0,0,0.5)]" aria-hidden="true">
        <path d="M22 25L140 6" stroke="#fb0505" strokeWidth="3" strokeLinecap="round" />
        <path d="M4 28l21-11-2 8 4 8z" fill="#fb0505" />
      </svg>
    </>
  );
}

export default function App() {
  return (
    <div className="relative flex h-screen flex-col overflow-hidden bg-[#f5f7f9] font-['Open_Sans','Noto_Sans_CJK_SC',sans-serif] text-[12px] leading-4 text-[#27314a]">
      <TitleBar />
      <MenuBar />
      <Ribbon />
      <main className="flex min-h-0 flex-1">
        <VerticalRuler />
        <Document />
        <ScrollBar />
        <StylesPanel />
        <div className="flex w-[43px] shrink-0">
          <SideTools />
        </div>
      </main>
      <StatusBar />
      <ImeBar />
      <CleanerToast />
      <SiteMark />
      <Arrows />
    </div>
  );
}
